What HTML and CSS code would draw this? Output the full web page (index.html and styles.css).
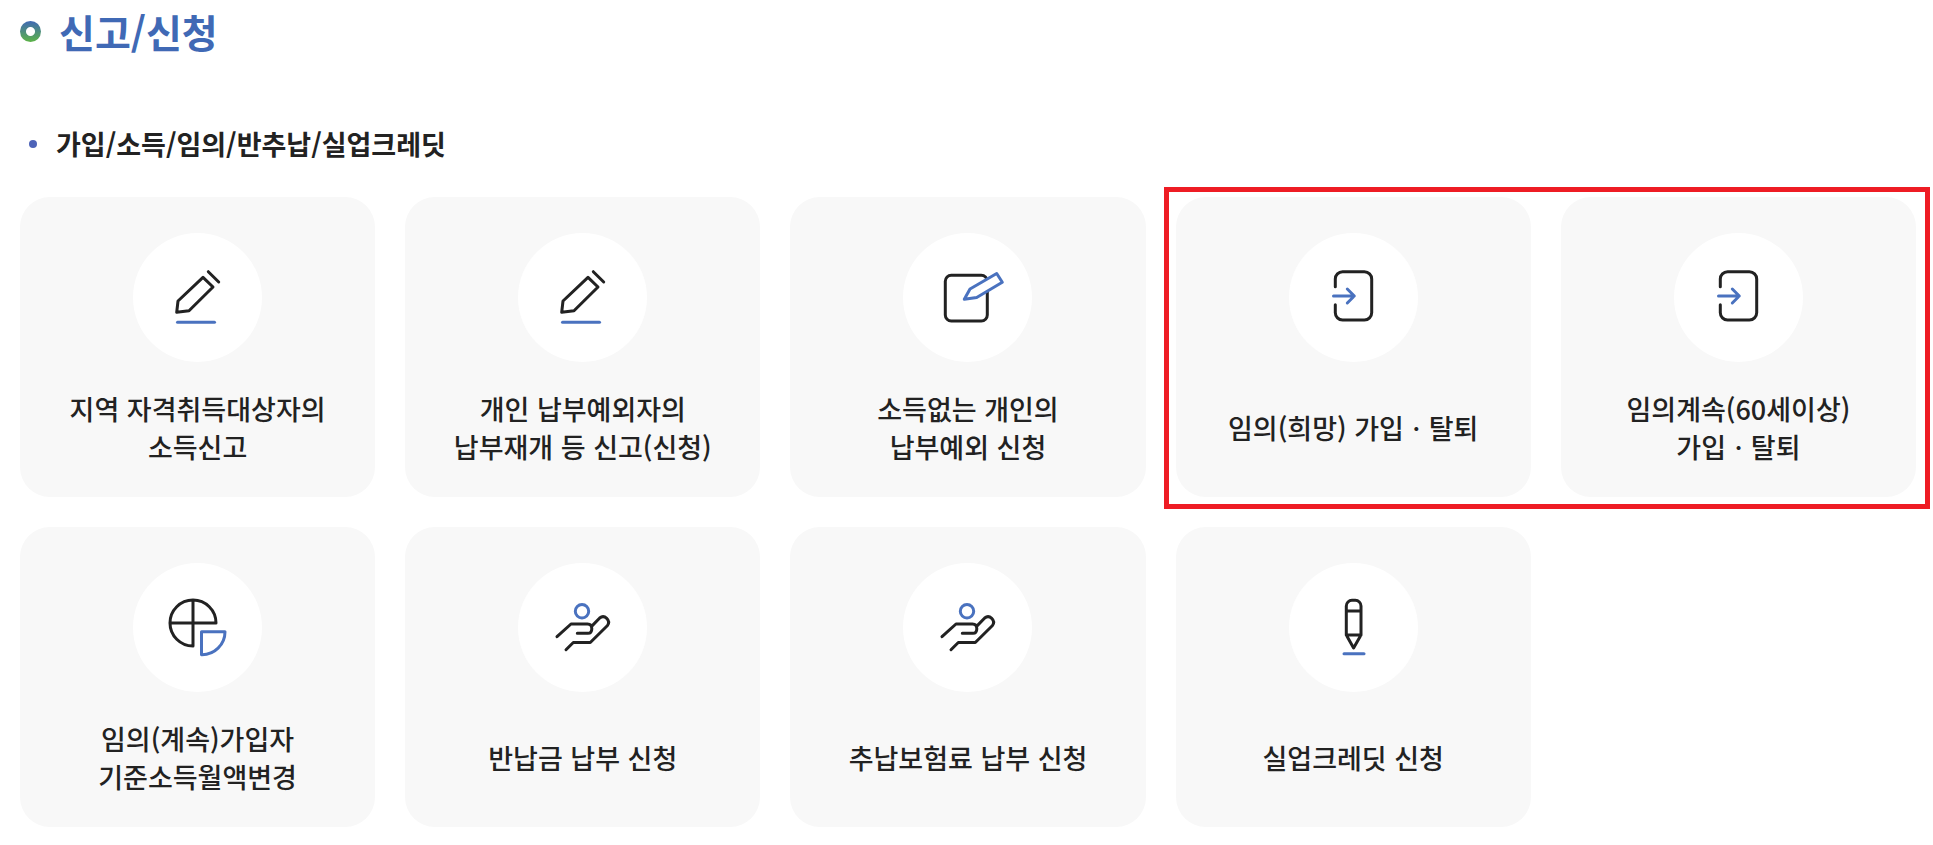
FILE: index.html
```html
<!DOCTYPE html>
<html lang="ko">
<head>
    <meta charset="UTF-8">
    <meta name="viewport" content="width=device-width, initial-scale=1.0">
    <title>신고/신청</title>
    <link rel="stylesheet" href="styles.css">
</head>
<body>
    <!-- 공통 아이콘 -->
    <svg class="symbols" aria-hidden="true">
        <symbol id="icon-pencil" viewBox="0 0 71 71">
            <path class="dark" d="M41 15.3L51 25L27 48.7L14.7 50.3L16 39Z M46.3 9.7L56.7 20"/>
            <path class="blue" d="M15.5 60.3H52.5"/>
        </symbol>
        <symbol id="icon-note" viewBox="0 0 71 71" overflow="visible">
            <rect class="dark" x="13.3" y="13.3" width="42" height="45.7" rx="6"/>
            <path class="blue filled" d="M64.7 11.5L70.3 20.3L44.7 35.5L32.3 37.3L38 27Z"/>
        </symbol>
        <symbol id="icon-enter" viewBox="0 0 71 71">
            <path class="dark" d="M17.3 24.7V17A7.3 7.3 0 0 1 24.6 9.7H46.4A7.3 7.3 0 0 1 53.7 17V50.7A7.3 7.3 0 0 1 46.4 58H24.6A7.3 7.3 0 0 1 17.3 50.7V42.7"/>
            <path class="blue" d="M15.5 34H36 M29.3 27L36.3 34L29.3 41"/>
        </symbol>
        <symbol id="icon-chart" viewBox="0 0 71 71">
            <path class="dark" d="M31 31V54A23 23 0 1 1 54 31Z M31 8V31 M8 31H31"/>
            <path class="blue" d="M39.5 39.7H63A23 23 0 0 1 39.5 62.7Z"/>
        </symbol>
        <symbol id="icon-hand" viewBox="0 0 71 71">
            <circle class="blue" cx="35" cy="19.3" r="6.7"/>
            <path class="dark" d="M10 44.7L24 32H40.5C43.5 32 44.8 34 44.8 36.7C44.8 39.5 43.5 41.3 41 41.3H30.3 M45.3 33.6L52.7 26C57.5 22 64 28.5 60.5 33.5L43.3 50.5H26.3L19 57.7"/>
        </symbol>
        <symbol id="icon-crayon" viewBox="0 0 71 71">
            <path class="dark" d="M28.3 43V14A5.7 5.7 0 0 1 34 8.3H37.3A5.7 5.7 0 0 1 43 14V43L35.6 56Z M28.3 19H43 M28.3 43H43"/>
            <path class="blue" d="M26 61.7H46"/>
        </symbol>
    </svg>

    <main class="container">
        <h1 class="title">신고/신청</h1>
        <h2 class="subtitle">가입/소득/임의/반추납/실업크레딧</h2>

        <div class="card-list">
            <a href="#" class="card">
                <span class="circle"><svg class="icon"><use href="#icon-pencil"/></svg></span>
                <span class="text">지역 자격취득대상자의<br>소득신고</span>
            </a>
            <a href="#" class="card">
                <span class="circle"><svg class="icon"><use href="#icon-pencil"/></svg></span>
                <span class="text">개인 납부예외자의<br>납부재개 등 신고(신청)</span>
            </a>
            <a href="#" class="card">
                <span class="circle"><svg class="icon"><use href="#icon-note"/></svg></span>
                <span class="text">소득없는 개인의<br>납부예외 신청</span>
            </a>
            <a href="#" class="card">
                <span class="circle"><svg class="icon"><use href="#icon-enter"/></svg></span>
                <span class="text">임의(희망) 가입ㆍ탈퇴</span>
            </a>
            <a href="#" class="card">
                <span class="circle"><svg class="icon"><use href="#icon-enter"/></svg></span>
                <span class="text">임의계속(60세이상)<br>가입ㆍ탈퇴</span>
            </a>
            <a href="#" class="card">
                <span class="circle"><svg class="icon"><use href="#icon-chart"/></svg></span>
                <span class="text">임의(계속)가입자<br>기준소득월액변경</span>
            </a>
            <a href="#" class="card">
                <span class="circle"><svg class="icon"><use href="#icon-hand"/></svg></span>
                <span class="text">반납금 납부 신청</span>
            </a>
            <a href="#" class="card">
                <span class="circle"><svg class="icon"><use href="#icon-hand"/></svg></span>
                <span class="text">추납보험료 납부 신청</span>
            </a>
            <a href="#" class="card">
                <span class="circle"><svg class="icon"><use href="#icon-crayon"/></svg></span>
                <span class="text">실업크레딧 신청</span>
            </a>
            <!-- 강조 테두리 -->
            <div class="highlight"></div>
        </div>
    </main>
</body>
</html>
```

FILE: styles.css
```css
* {
    box-sizing: border-box;
}

body {
    margin: 0;
    background: #fff;
    color: #222;
    font-family: "Noto Sans CJK KR", "Noto Sans", sans-serif;
}

.symbols {
    display: none;
}

.container {
    padding: 4px 17px 18px 20px;
}

.title {
    display: flex;
    align-items: center;
    gap: 18px;
    margin: 0;
    color: #4069b5;
    font-size: 39px;
    font-weight: 700;
    line-height: 55px;
}

/* 파랑 -> 초록 링 */
.title::before {
    content: "";
    width: 21px;
    height: 21px;
    border-radius: 50%;
    background: radial-gradient(circle, #fff 4px, transparent 5px), linear-gradient(#4069b5, #5cb346);
}

.subtitle {
    display: flex;
    align-items: center;
    gap: 19px;
    margin: 65px 0 33px;
    padding-left: 9px;
    font-size: 27px;
    font-weight: 700;
    line-height: 40px;
}

.subtitle::before {
    content: "";
    width: 8px;
    height: 8px;
    border-radius: 50%;
    background: #4d63b8;
}

.card-list {
    position: relative;
    display: grid;
    grid-template-columns: repeat(5, 1fr);
    gap: 30px;
}

.card {
    display: flex;
    flex-direction: column;
    align-items: center;
    gap: 28px;
    padding: 36px 20px 31px;
    border-radius: 30px;
    background: #f8f8f8;
    color: #222;
    text-decoration: none;
}

.circle {
    display: flex;
    align-items: center;
    justify-content: center;
    width: 129px;
    height: 129px;
    border-radius: 50%;
    background: #fff;
}

.icon {
    width: 71px;
    height: 71px;
    overflow: visible;
}

.text {
    display: flex;
    align-items: center;
    min-height: 76px;
    font-size: 27px;
    font-weight: 500;
    line-height: 38px;
    text-align: center;
}

.dark,
.blue {
    fill: none;
    stroke: #222;
    stroke-width: 3;
    stroke-linecap: round;
    stroke-linejoin: round;
}

.blue {
    stroke: #4a72bf;
}

.filled {
    fill: #fff;
}

/* 4, 5번째 카드 위에 표시 */
.highlight {
    position: absolute;
    grid-column: 4 / 6;
    grid-row: 1 / 2;
    inset: -10px -14px -12px -12px;
    border: 5px solid #ee1c24;
    pointer-events: none;
}
```
